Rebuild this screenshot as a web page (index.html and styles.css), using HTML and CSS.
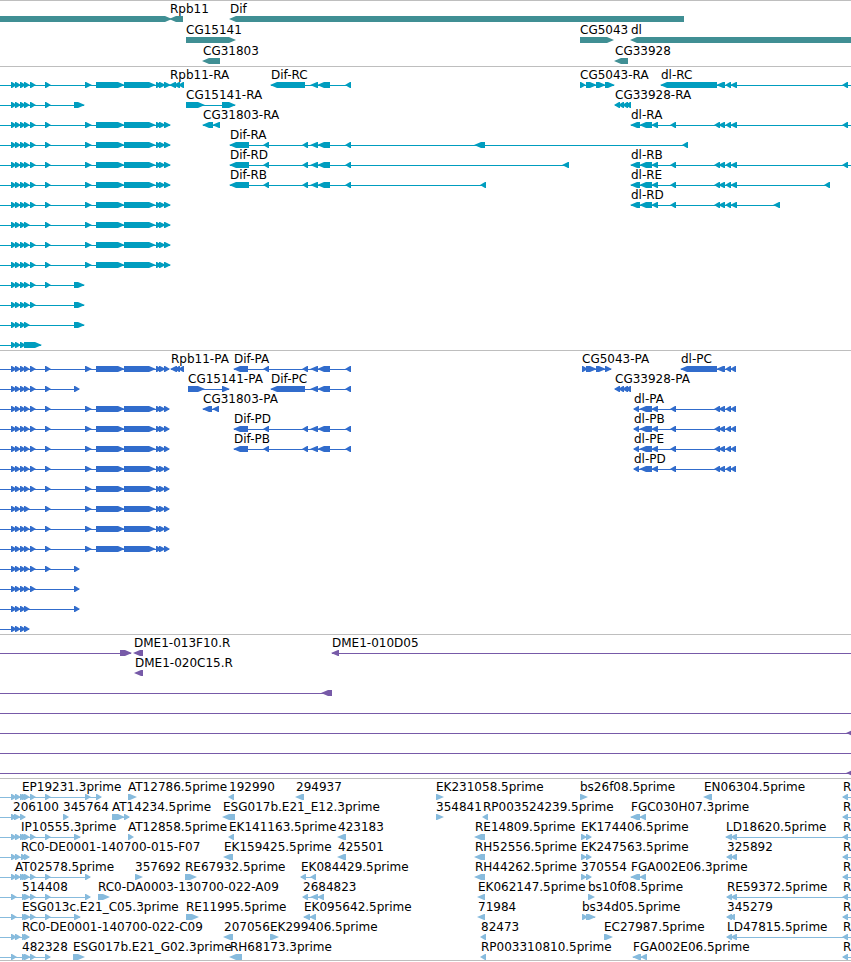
FILE: index.html
```html
<!DOCTYPE html>
<html lang="en">
  <head>
    <meta charset="UTF-8" />
    <meta name="viewport" content="width=device-width, initial-scale=1.0" />
    <title>Genome Browser</title>
    <link rel="stylesheet" href="styles.css">
  </head>
  <body>
    <main class="browser">
      <section class="track genes" id="genes" aria-label="Genes"></section>
      <section class="track transcripts" id="transcripts" aria-label="Transcripts"></section>
      <section class="track proteins" id="proteins" aria-label="Proteins"></section>
      <section class="track clones" id="clones" aria-label="Clones"></section>
      <section class="track ests" id="ests" aria-label="ESTs"></section>
    </main>
    <script src="script.js"></script>
  </body>
</html>
```

FILE: styles.css
```css
body {
  margin: 0;
  background: #fff;
  color: #000;
  font-family: "DejaVu Sans", sans-serif;
  font-size: 12px;
}
.track {
  border-top: 1px solid #bebebe;
  padding: 1px 0 2px;
}
.track:last-child {
  border-bottom: 1px solid #bebebe;
  padding-bottom: 0;
}
.lane {
  display: block;
  width: 100%;
  height: 20px;
}
.lane text {
  fill: #000;
}
.lane path {
  fill: currentColor;
}
.lane line {
  stroke: currentColor;
  stroke-width: 1px;
  shape-rendering: crispEdges;
}
.genes {
  color: #408f94;
  padding-bottom: 1px;
}
.genes .lane {
  height: 21px;
}
.transcripts {
  color: #009dbf;
}
.proteins {
  color: #316ccc;
}
.clones {
  color: #775aa8;
}
.ests {
  color: #87bbdd;
}
```

FILE: script.js
```js
const SVG = "http://www.w3.org/2000/svg";
const HEAD = 6;

// exons shared by several models
const start = [[11, 16], [15, 20], [20, 25], [24, 29]];
const long = [[85, 91], [96, 124], [124, 155], [156, 161], [159, 165]];
const difMid = [[264, 269], [303, 308], [311, 318], [318, 330], [346, 351]];
const difC = [[271, 305], [311, 318], [318, 330], [346, 351]];
const dlMid = [[640, 652], [652, 658], [671, 676], [715, 720], [719, 725], [726, 731]];
const e30 = [30, 35];
const e45 = [45, 50];
const estStart = [[11, 16], [15, 20], [20, 25], [22, 27], [24, 29], e30, e45];
const estShort = [[11, 16], [22, 27], [24, 30], e30, e45];

// forward and reverse features; opt.left / opt.right run off the window
function fwd(name, exons, opt) {
  return { name, exons, strand: 1, ...opt };
}
function rev(name, exons, opt) {
  return { name, exons, strand: -1, ...opt };
}
const left = { left: true };
const right = { right: true };

const fullT = fwd("", [...start, e30, e45, ...long, [164, 170]], left);
const fullP = fwd("", [...start, e30, e45, ...long, [164, 169]], left);
const edge = rev("R", [[843, 848]], right);

const tracks = {
  genes: [
    [
      fwd("", [[-10, 171]]),
      rev("Rpb11", [[170, 183]]),
      rev("Dif", [[230, 684]]),
    ],
    [
      fwd("CG15141", [[186, 235]]),
      fwd("CG5043", [[580, 613]]),
      rev("dl", [[631, 4000]]),
    ],
    [rev("CG31803", [[203, 220]]), rev("CG33928", [[615, 628]])],
  ],
  transcripts: [
    [
      fullT,
      rev("Rpb11-RA", [[170, 176], [174, 180], [179, 184]]),
      rev("Dif-RC", difC),
      fwd("CG5043-RA", [[580, 585], [586, 596], [596, 605], [605, 614]]),
      rev("dl-RC", [[661, 717], [717, 725], [726, 731], [731, 737], [843, 848]], right),
    ],
    [
      fwd("", [...start, e30, e45, [74, 84]], left),
      fwd("CG15141-RA", [[186, 204], [222, 235]]),
      rev("CG33928-RA", [[615, 620], [619, 624], [623, 628], [626, 631]]),
    ],
    [
      fullT,
      rev("CG31803-RA", [[203, 213], [213, 220]]),
      rev("dl-RA", [[631, 640], ...dlMid, [731, 737], [843, 848]], right),
    ],
    [fullT, rev("Dif-RA", [[230, 249], ...difMid, [475, 485], [683, 688]])],
    [
      fullT,
      rev("Dif-RD", [[230, 249], ...difMid, [563, 569]]),
      rev("dl-RB", [[631, 640], ...dlMid, [731, 737], [843, 848]], right),
    ],
    [
      fullT,
      rev("Dif-RB", [[230, 249], ...difMid, [481, 486]]),
      rev("dl-RE", [[631, 640], ...dlMid, [731, 737], [825, 830]]),
    ],
    [fullT, rev("dl-RD", [[631, 640], ...dlMid, [731, 737], [774, 780]])],
    [fwd("", [...start, e45, ...long, [164, 170]], left)],
    [fullT],
    [fullT],
    [fwd("", [...start, e30, e45, [74, 84]], left)],
    [fwd("", [...start, e30, [74, 84]], left)],
    [fwd("", [...start, [74, 84]], left)],
    [fwd("", [[11, 16], [15, 20], [20, 25], [24, 41]], left)],
  ],
  proteins: [
    [
      fullP,
      rev("Rpb11-PA", [[171, 177], [175, 180], [179, 184]]),
      rev("Dif-PA", [[234, 248], ...difMid]),
      fwd("CG5043-PA", [[582, 587], [586, 596], [596, 605], [605, 611]]),
      rev("dl-PC", [[681, 717], [717, 725], [726, 731], [731, 736]]),
    ],
    [
      fwd("", [...start, e30, e45, [74, 79]], left),
      fwd("CG15141-PA", [[188, 204], [222, 229]]),
      rev("Dif-PC", difC),
      rev("CG33928-PA", [[615, 620], [619, 624], [623, 628], [626, 631]]),
    ],
    [
      fullP,
      rev("CG31803-PA", [[203, 212], [213, 219]]),
      rev("dl-PA", [[634, 639], ...dlMid, [731, 736]]),
    ],
    [
      fullP,
      rev("Dif-PD", [[234, 248], ...difMid]),
      rev("dl-PB", [[634, 639], ...dlMid, [731, 736]]),
    ],
    [
      fullP,
      rev("Dif-PB", [[234, 248], ...difMid]),
      rev("dl-PE", [[634, 639], ...dlMid, [731, 736]]),
    ],
    [fullP, rev("dl-PD", [[634, 639], ...dlMid, [731, 736]])],
    [fullP],
    [fwd("", [...start, e45, ...long, [164, 169]], left)],
    [fullP],
    [fullP],
    [fwd("", [...start, e30, e45, [74, 79]], left)],
    [fwd("", [...start, e30, [74, 79]], left)],
    [fwd("", [...start, [74, 79]], left)],
    [fwd("", start, left)],
  ],
  clones: [
    [
      fwd("", [[120, 131]], left),
      rev("DME1-013F10.R", [[134, 143]]),
      rev("DME1-010D05", [[332, 339]], right),
    ],
    [rev("DME1-020C15.R", [[135, 143]])],
    [rev("", [[322, 332]], left)],
    [rev("", [], { left: true, right: true })],
    [rev("", [[847, 857]], { left: true, right: true })],
    [rev("", [], { left: true, right: true })],
    [rev("", [[847, 857]], { left: true, right: true })],
  ],
  ests: [
    [
      fwd("EP19231.3prime", [...estStart, [85, 90], [96, 101]], { left: true, at: 22 }),
      fwd("AT12786.5prime", [[128, 136]]),
      rev("192990", [[229, 234]]),
      rev("294937", [[296, 304]]),
      fwd("EK231058.5prime", [[436, 443]]),
      fwd("bs26f08.5prime", [[580, 587]]),
      rev("EN06304.5prime", [[704, 712]]),
      edge,
    ],
    [
      fwd("206100", [[11, 16], [14, 20], [20, 25]], { left: true, at: 13 }),
      fwd("345764", [[63, 68]]),
      fwd("AT14234.5prime", [[112, 124], [124, 129]]),
      rev("ESG017b.E21_E12.3prime", [[223, 235]]),
      fwd("354841", [[436, 443]]),
      rev("RP003524239.5prime", [[483, 488]]),
      rev("FGC030H07.3prime", [[631, 640], [640, 646]]),
      edge,
    ],
    [
      fwd("IP10555.3prime", [...estStart, [74, 80]], { left: true, at: 21 }),
      fwd("AT12858.5prime", [[128, 133]]),
      rev("EK141163.5prime", [[229, 234]]),
      rev("423183", [[338, 346]]),
      rev("RE14809.5prime", [[475, 485]]),
      fwd("EK174406.5prime", [[581, 586], [586, 591]]),
      rev("LD18620.5prime", [[726, 732], [731, 737]], right),
      edge,
    ],
    [
      fwd("RC0-DE0001-140700-015-F07", [[11, 16], [15, 20], [21, 26], [24, 29]], { left: true, at: 21 }),
      rev("EK159425.5prime", [[224, 233]]),
      rev("425501", [[338, 346]]),
      rev("RH52556.5prime", [[475, 485]]),
      fwd("EK247563.5prime", [[581, 586], [586, 591]]),
      rev("325892", [[727, 732], [731, 737]]),
      edge,
    ],
    [
      fwd("AT02578.5prime", [...estStart, [85, 90]], { left: true, at: 15 }),
      fwd("357692", [[135, 142]]),
      fwd("RE67932.5prime", [[185, 196]]),
      rev("EK084429.5prime", [[301, 306], [311, 316]]),
      rev("RH44262.5prime", [[475, 485]]),
      fwd("370554", [[581, 586], [586, 591]]),
      rev("FGA002E06.3prime", [[631, 640], [640, 646]]),
      edge,
    ],
    [
      fwd("514408", [...estShort, [85, 90]], { left: true, at: 22 }),
      fwd("RC0-DA0003-130700-022-A09", [[98, 109]]),
      rev("2684823", [[303, 308], [311, 318], [318, 324]]),
      rev("EK062147.5prime", [[478, 485]]),
      fwd("bs10f08.5prime", [[588, 594]]),
      rev("RE59372.5prime", [[727, 732], [731, 737]], right),
      edge,
    ],
    [
      fwd("ESG013c.E21_C05.3prime", [...estShort, [74, 80]], { left: true, at: 22 }),
      fwd("RE11995.5prime", [[186, 198]]),
      rev("EK095642.5prime", [[304, 310], [310, 316]]),
      rev("71984", [[478, 485]]),
      fwd("bs34d05.5prime", [[582, 587], [586, 595]]),
      rev("345279", [[727, 732], [730, 735]]),
      edge,
    ],
    [
      fwd("RC0-DE0001-140700-022-C09", [[11, 16], [15, 20], [22, 27], [24, 29]], { left: true, at: 22 }),
      rev("207056", [[224, 233]]),
      fwd("EK299406.5prime", [[270, 278]]),
      rev("82473", [[481, 486]]),
      fwd("EC27987.5prime", [[604, 612]]),
      rev("LD47815.5prime", [[727, 732], [731, 737]], right),
      edge,
    ],
    [
      fwd("482328", estShort, { left: true, at: 22 }),
      fwd("ESG017b.E21_G02.3prime", [[73, 84]]),
      rev("RH68173.3prime", [[230, 242]]),
      rev("RP003310810.5prime", [[481, 486]]),
      rev("FGA002E06.5prime", [[633, 641], [641, 647]]),
      edge,
    ],
  ],
};

function add(parent, tag, attrs) {
  const node = document.createElementNS(SVG, tag);
  for (const key in attrs) node.setAttribute(key, attrs[key]);
  parent.appendChild(node);
  return node;
}

// short exons are all arrow head apart from a 1px tail
function drawExon(svg, s, e, strand) {
  const head = Math.min(HEAD, e - s - 1);
  const tip = strand > 0 ? e + 1 : s - 1;
  const neck = strand > 0 ? e - head : s + head;
  const tail = strand > 0 ? s : e;
  add(svg, "path", {
    d: `M${tail} 14H${neck}L${tip} 17L${neck} 20H${tail}Z`,
  });
}

function drawFeature(svg, f) {
  const count = f.exons.length;
  if (f.left || f.right || count > 1) {
    add(svg, "line", {
      x1: f.left ? 0 : f.exons[0][0],
      x2: f.right ? "100%" : f.exons[count - 1][1],
      y1: 17.5,
      y2: 17.5,
    });
  }
  f.exons.forEach(([s, e]) => drawExon(svg, s, e, f.strand));
  if (f.name) {
    const x = f.at || f.exons[0][0];
    add(svg, "text", { x, y: 11 }).textContent = f.name;
  }
}

for (const id in tracks) {
  const track = document.getElementById(id);
  tracks[id].forEach((features) => {
    const lane = add(track, "svg", { class: "lane" });
    features.forEach((f) => drawFeature(lane, f));
  });
}
```
